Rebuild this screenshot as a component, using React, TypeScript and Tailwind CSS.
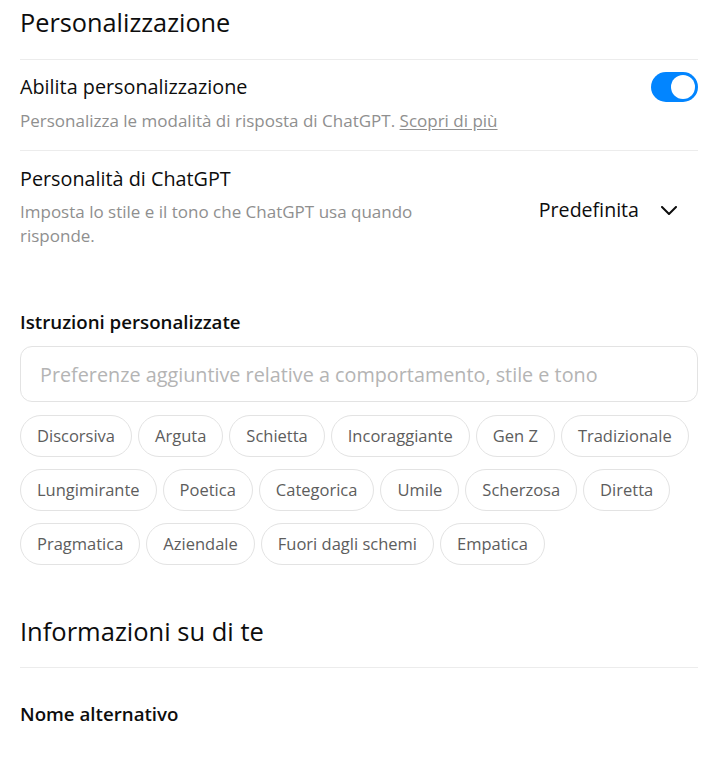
import { useState } from 'react';

const chips = [
  'Discorsiva',
  'Arguta',
  'Schietta',
  'Incoraggiante',
  'Gen Z',
  'Tradizionale',
  'Lungimirante',
  'Poetica',
  'Categorica',
  'Umile',
  'Scherzosa',
  'Diretta',
  'Pragmatica',
  'Aziendale',
  'Fuori dagli schemi',
  'Empatica',
];

export default function App() {
  const [enabled, setEnabled] = useState(true);
  const [text, setText] = useState('');

  return (
    <div
      className="min-h-screen bg-white pl-5 pr-[17px] pt-[6px] text-[#0d0d0d]"
      style={{ fontFamily: '"Open Sans", "Noto Sans", sans-serif' }}
    >
      <h2 className="text-[25.3px] leading-8">Personalizzazione</h2>
      <div className="mt-[21px] h-px bg-[#ececec]" />

      {/* Abilita */}
      <div className="flex items-start justify-between pt-[13px] pb-[17px]">
        <div>
          <div className="text-[19.8px] leading-7">Abilita personalizzazione</div>
          <div className="mt-2 text-[17px] leading-6 text-[#8f8f8f]">
            Personalizza le modalità di risposta di ChatGPT.{' '}
            <a className="underline underline-offset-2 text-[#8f8f8f]" href="#">
              Scopri di più
            </a>
          </div>
        </div>
        <button
          onClick={() => setEnabled(!enabled)}
          className={`mt-[-1px] flex h-[30px] w-[47px] items-center rounded-full px-[3px] ${
            enabled ? 'justify-end bg-[#0285ff]' : 'justify-start bg-[#d9d9d9]'
          }`}
        >
          <span className="h-6 w-6 rounded-full bg-white" />
        </button>
      </div>
      <div className="h-px bg-[#ececec]" />

      {/* Personalità */}
      <div className="flex items-start justify-between pt-[14px]">
        <div className="max-w-[405px]">
          <div className="text-[19.8px] leading-7">Personalità di ChatGPT</div>
          <div className="mt-[7px] text-[17px] leading-6 text-[#8f8f8f]">
            Imposta lo stile e il tono che ChatGPT usa quando risponde.
          </div>
        </div>
        <button className="mt-[31px] flex h-7 items-center gap-[22px] pr-[21px] text-[19.6px]">
          Predefinita
          <svg width="16" height="9" viewBox="0 0 16 9" fill="none">
            <path d="M1 1l7 7 7-7" stroke="#0d0d0d" strokeWidth="2" strokeLinecap="round" strokeLinejoin="round" />
          </svg>
        </button>
      </div>

      {/* Istruzioni */}
      <div className="mt-[60px] text-[18.7px] font-semibold leading-7">Istruzioni personalizzate</div>
      <input
        value={text}
        onChange={e => setText(e.target.value)}
        placeholder="Preferenze aggiuntive relative a comportamento, stile e tono"
        className="mt-[10px] h-[56px] w-full rounded-xl border border-[#e3e3e3] px-[19px] text-[19.8px] outline-none placeholder:text-[#b4b4b4]"
      />
      <div className="mt-[13px] flex flex-wrap gap-x-[6px] gap-y-3">
        {chips.map(c => (
          <button
            key={c}
            onClick={() => setText(t => (t ? t + ' ' + c : c))}
            className="h-[42px] rounded-full border border-[#e3e3e3] px-4 text-[16.5px] text-[#5d5d5d]"
          >
            {c}
          </button>
        ))}
      </div>

      {/* Informazioni */}
      <h2 className="mt-[50px] text-[25.5px] leading-8">Informazioni su di te</h2>
      <div className="mt-5 h-px bg-[#ececec]" />
      <div className="mt-8 text-[18.7px] font-semibold leading-7">Nome alternativo</div>
    </div>
  );
}
